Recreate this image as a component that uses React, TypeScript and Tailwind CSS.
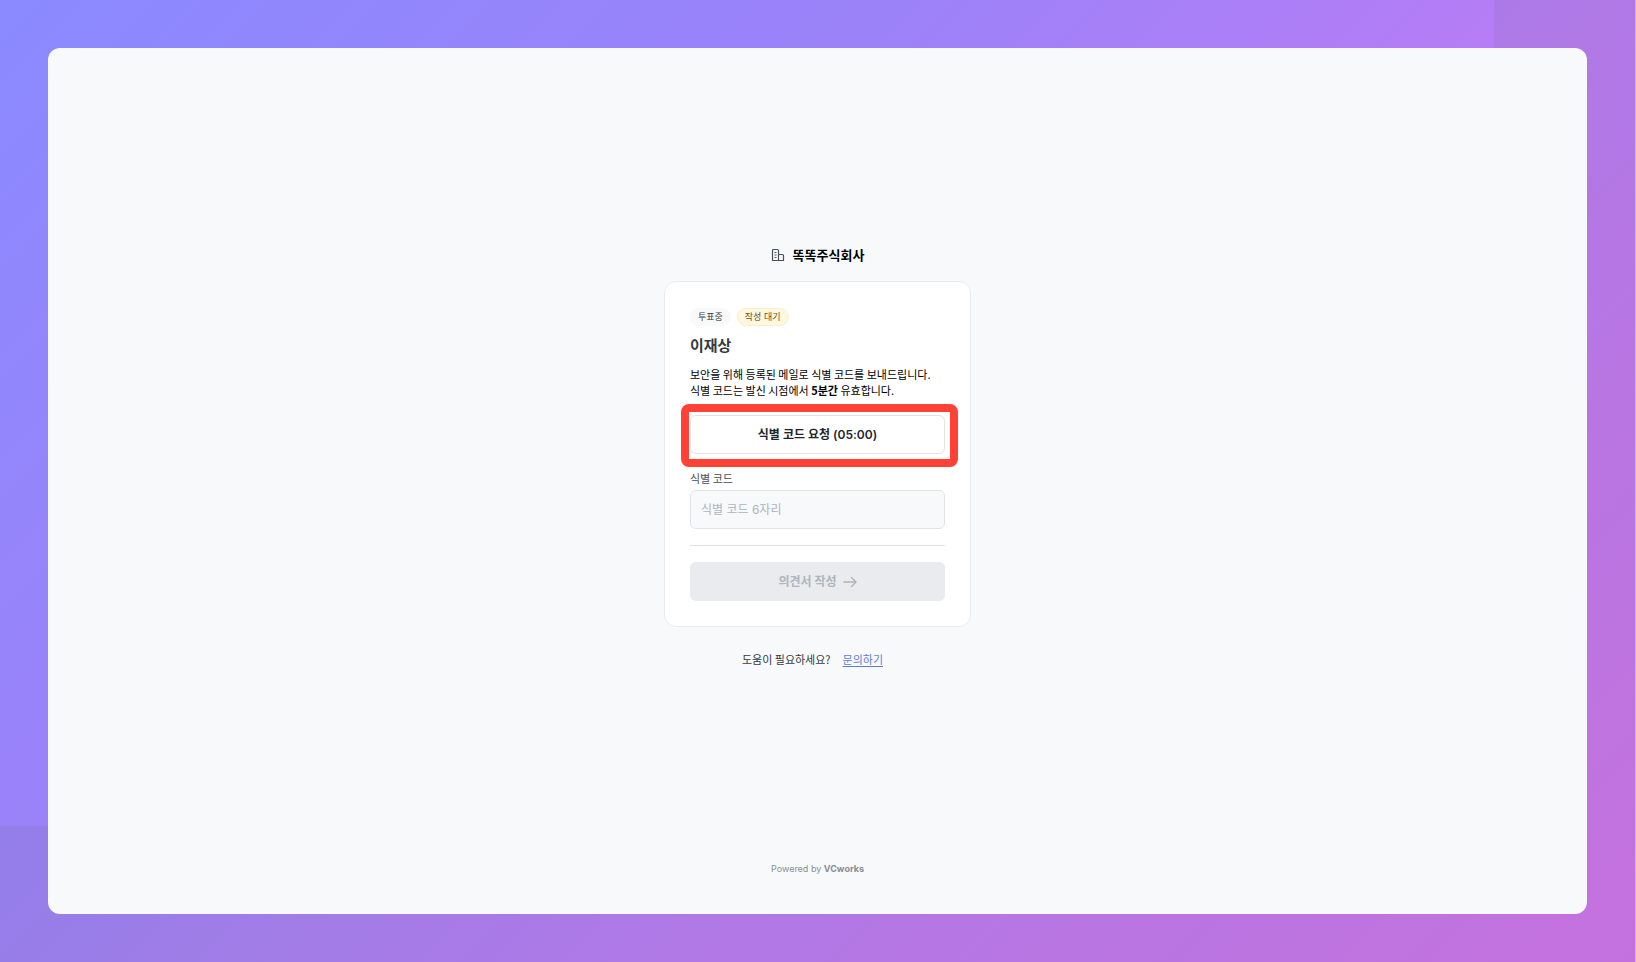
import React from "react";

function BuildingIcon() {
  return (
    <svg width="14" height="14" viewBox="0 0 14 14" fill="none" stroke="#495057" strokeWidth="1.2" strokeLinejoin="round" aria-hidden="true">
      <path d="M1.500 12.500v-10q0-1 1-1h4q1 0 1 1v10z" />
      <path d="M7.500 6.500h4q1 0 1 1v5h-5" />
      <path d="M3.500 4.500h2M3.500 7h2M3.500 9.500h2" strokeWidth="1" />
    </svg>
  );
}

function ArrowIcon() {
  return (
    <svg width="14" height="14" viewBox="0 0 14 14" fill="none" stroke="currentColor" strokeWidth="1.3" strokeLinecap="round" strokeLinejoin="round" aria-hidden="true">
      <path d="M1 7h12M8.500 2.500L13 7l-4.500 4.500" />
    </svg>
  );
}

export default function App() {
  return (
    <div className="relative isolate flex min-h-screen flex-col border-r border-[#c9b3fa] bg-[linear-gradient(135deg,#8b8aff_0%,#9c82f9_35%,#b97cf5_62%,#d073ec_100%)] p-12 font-['Inter','Noto_Sans_CJK_KR',sans-serif]">
      <div className="absolute top-0 right-0 -z-10 h-full w-[141px] bg-[#646464]/10" />
      <div className="absolute right-[141px] bottom-0 left-0 -z-10 h-[136px] bg-[#646464]/10" />
      <div className="flex grow flex-col items-center rounded-xl bg-[#f8f9fb] pb-9">
        <main className="flex grow flex-col items-center justify-center pt-1">
          <h1 className="flex items-center gap-2 text-[13px] leading-5 font-semibold text-black">
            <BuildingIcon />
            똑똑주식회사
          </h1>
          <form className="mt-4 flex w-[307px] flex-col rounded-xl border border-[#e9ecef] bg-white px-[25px] pt-[26px] pb-[25px]">
            <div className="flex gap-1.5 text-[9px] leading-4">
              <span className="rounded-full border border-[#f8f9fb] bg-[#f8f9fb] px-[7px] text-[#343a40]">투표중</span>
              <span className="rounded-full border border-[#fbeecb] bg-[#fff8e1] px-[7px] text-[#66501c]">작성 대기</span>
            </div>
            <h2 className="mt-2 text-[15px] leading-6 font-semibold text-[#343a40]">이재상</h2>
            <p className="mt-2 font-['Noto_Sans_CJK_KR','Inter',sans-serif] text-[11px] leading-4 whitespace-nowrap text-black">
              보안을 위해 등록된 메일로 식별 코드를 보내드립니다.
              <br />
              식별 코드는 발신 시점에서 <strong className="font-bold">5분간</strong> 유효합니다.
            </p>
            <div className="relative mt-[17px]">
              <button type="button" className="block h-[39px] w-full rounded-md border border-[#e0e3e6] text-[12px] font-semibold text-[#212529]">
                식별 코드 요청 (05:00)
              </button>
              <div className="pointer-events-none absolute -top-[11px] -right-[13px] -bottom-[13px] -left-[9px] rounded-lg border-8 border-[#ff4136]" />
            </div>
            <label htmlFor="code" className="mt-4 font-['Noto_Sans_CJK_KR','Inter',sans-serif] text-[11px] leading-4 text-[#495057]">
              식별 코드
            </label>
            <input id="code" disabled placeholder="식별 코드 6자리" className="mt-1 h-[39px] rounded-md border border-[#e0e4e8] bg-[#f8f9fb] px-2.5 text-[12px] placeholder:text-[#adb5bd]" />
            <hr className="my-4 border-[#dee2e6]" />
            <button type="submit" disabled className="flex h-[39px] items-center justify-center gap-1.5 rounded-md bg-[#e9ebee] text-[12px] font-semibold text-[#adb5bd]">
              의견서 작성
              <ArrowIcon />
            </button>
          </form>
          <p className="mt-6 flex gap-3 pr-2.5 font-['Noto_Sans_CJK_KR','Inter',sans-serif] text-[11px] leading-4 text-[#343a40]">
            도움이 필요하세요?
            <a href="#contact" className="text-[#5c7cdb] underline underline-offset-2">문의하기</a>
          </p>
        </main>
        <footer className="text-[9px] leading-[18px] text-[#868e96]">
          Powered by <strong className="font-bold">VCworks</strong>
        </footer>
      </div>
    </div>
  );
}
